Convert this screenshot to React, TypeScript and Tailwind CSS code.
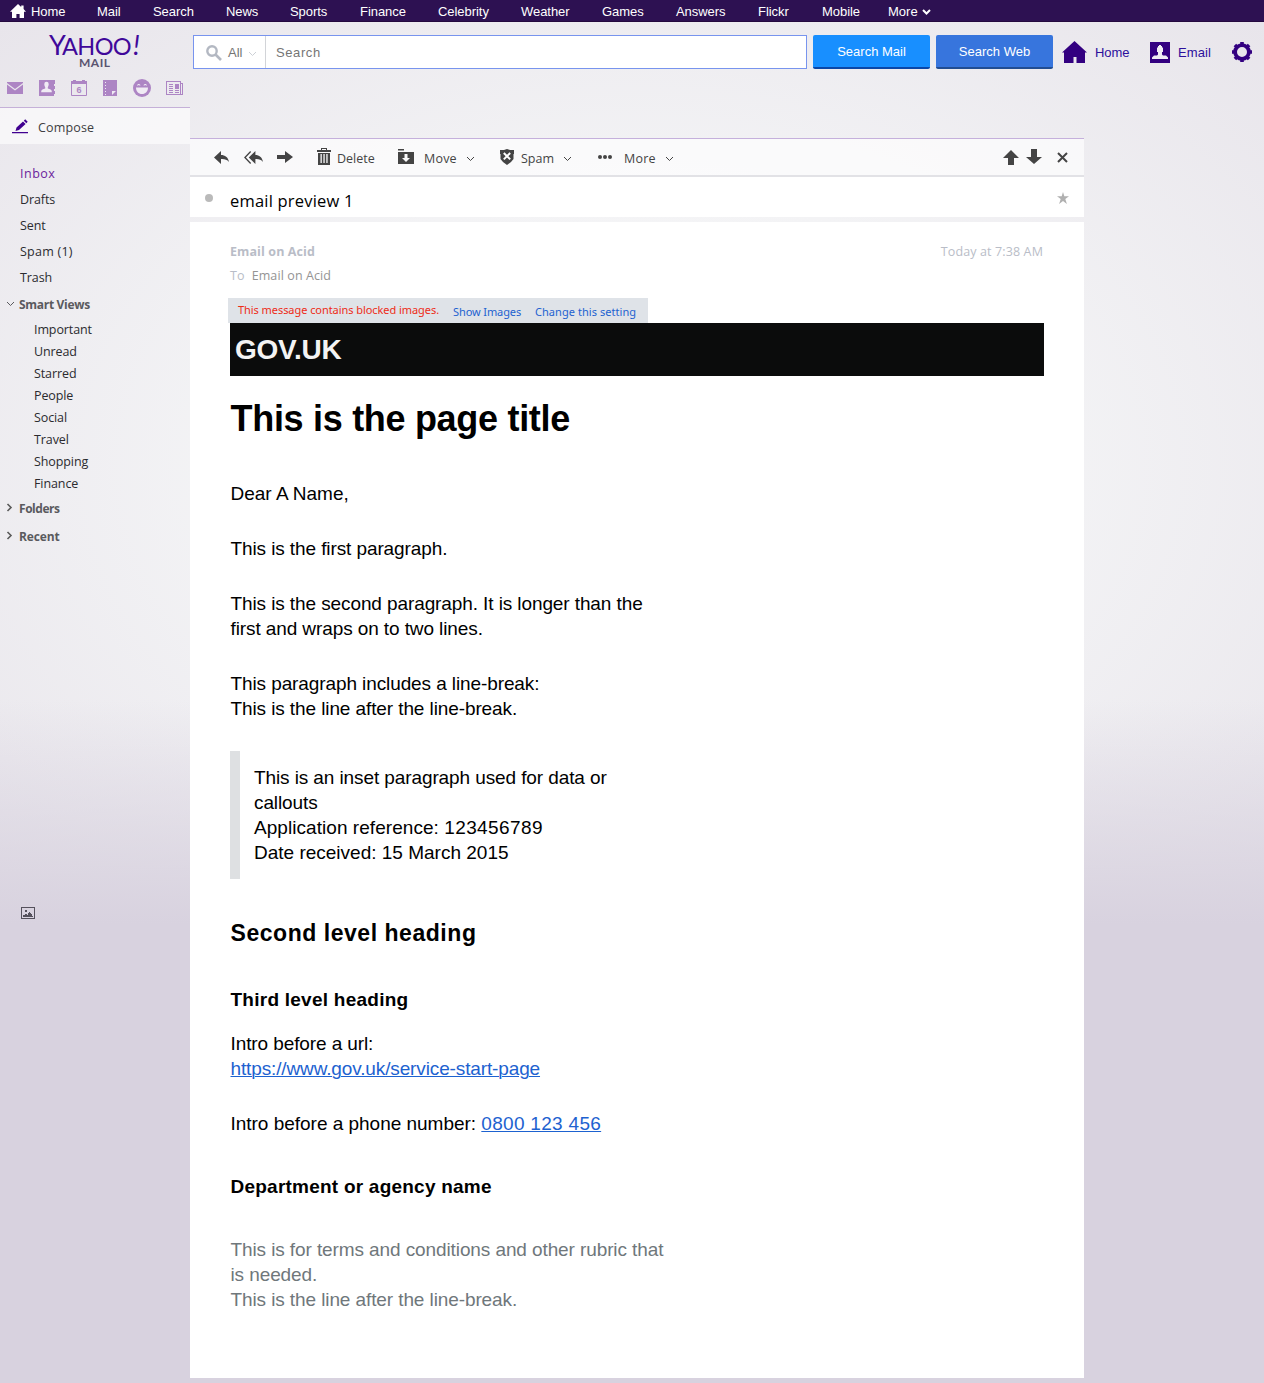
import type { ReactNode } from "react";

const NAV: [string, string][] = [
  ["Home", "w-[66px]"],
  ["Mail", "w-14"],
  ["Search", "w-[73px]"],
  ["News", "w-16"],
  ["Sports", "w-[70px]"],
  ["Finance", "w-[78px]"],
  ["Celebrity", "w-[83px]"],
  ["Weather", "w-[81px]"],
  ["Games", "w-[74px]"],
  ["Answers", "w-[82px]"],
  ["Flickr", "w-16"],
  ["Mobile", "w-[66px]"],
];

const FOLDERS: [string, string][] = [
  ["Inbox", "text-[#6b1e9c] tracking-[0.5px]"],
  ["Drafts", "tracking-[-0.1px]"],
  ["Sent", "tracking-[-0.1px]"],
  ["Spam (1)", "tracking-[0.25px]"],
  ["Trash", "tracking-[-0.1px]"],
];
const SMART = ["Important", "Unread", "Starred", "People", "Social", "Travel", "Shopping", "Finance"];

const UI = "font-['Open_Sans','Noto_Sans',sans-serif]";

function Chevron({ className = "", width = 1 }: { className?: string; width?: number }) {
  return (
    <svg className={className} width="9" height="6" viewBox="0 0 9 6" fill="none" stroke="currentColor" strokeWidth={width}>
      <path d="M1 1l3.5 3.5L8 1" />
    </svg>
  );
}

function ArrowHead() {
  return (
    <svg className="mr-[6px] -mt-[3px]" width="7" height="9" viewBox="0 0 7 9" fill="none" stroke="#5a5a5a" strokeWidth="1.6">
      <path d="M1.500 1l3.500 3.500L1.500 8" />
    </svg>
  );
}

function TopBar() {
  return (
    <header className="flex h-[22px] items-center border-b border-[#25093f] bg-[#2d1152] pl-[10px] text-[13px] leading-[22px] text-white">
      <svg width="16" height="14" viewBox="0 0 16 14" fill="#fff" className="mr-[5px]">
        <path d="M8 0l3.200 3V1.400h2.400V5L16 7.800h-2V14H9.600v-4H6.400v4H2V7.800H0z" />
      </svg>
      {NAV.map(([label, w]) => (
        <span key={label} className={`pt-[2px] tracking-[-0.05px] ${w}`}>{label}</span>
      ))}
      <span className="pt-[2px]">More</span>
      <Chevron className="ml-1 mt-[2px]" width={2} />
    </header>
  );
}

function Logo() {
  return (
    <div className="mt-[12px] ml-[49px] h-[35px] font-['Lato',sans-serif]">
      <div className="flex h-[24px] items-baseline text-[#40089a]">
        <span className="w-[13px] text-[27px] leading-[22px]">Y</span>
        <span className="w-[71px] text-[23.5px] leading-[22px] tracking-[-0.6px]">AHOO</span>
        <span className="text-[27px] leading-[22px] italic">!</span>
      </div>
      <div className="pl-[30px] text-[12px] leading-[9px] font-bold tracking-[0.5px] text-[#5b5470]">MAIL</div>
    </div>
  );
}

function AppIcons() {
  return (
    <div className="mt-[10px] flex h-[18px] items-center gap-4 pl-[7px] text-[#ad85c4]">
      <svg width="16" height="12" viewBox="0 0 16 12" fill="currentColor">
        <path d="M0 0h16v1L8 7 0 1zM0 2.400L8 8.600l8-6.200V12H0z" />
      </svg>
      <svg width="16" height="16" viewBox="0 0 16 16">
        <path d="M0 0h16v4h-1v2h1v3h-1v2h1v3h-1v2H0z" fill="currentColor" />
        <path d="M5.300 4a2.200 2.200 0 0 1 4.400 0c0 1.500-.4 2.400-.9 3.200v1.300c2 .5 4 1 4 3v.8H2.200v-.8c0-2 2-2.500 4-3V7.200C5.700 6.400 5.300 5.500 5.300 4z" fill="#f0ebf4" />
      </svg>
      <svg width="16" height="16" viewBox="0 0 16 16">
        <path d="M.5 2h15v13.500H.5z" fill="none" stroke="currentColor" />
        <path d="M0 1h2V0h3v1h6V0h3v1h2v3H0z" fill="currentColor" />
        <text x="8" y="13" fontSize="9" fontWeight="700" textAnchor="middle" fill="currentColor" fontFamily="Liberation Sans, sans-serif">6</text>
      </svg>
      <svg className="-mr-px" width="15" height="16" viewBox="0 0 15 16">
        <path d="M0 0h14v16H0z" fill="currentColor" />
        <path d="M2 2h1v1H2zM2 5h1v1H2zM2 8h1v1H2zM2 11h1v1H2zM2 14h1v1H2zM9 15v-4h4z" fill="#f0ebf4" />
      </svg>
      <svg className="-mr-px" width="18" height="18" viewBox="0 0 18 18">
        <circle cx="9" cy="9" r="9" fill="currentColor" />
        <path d="M3 8.500h12c0 4-2.500 6.500-6 6.500s-6-2.500-6-6.500zM4 6.500c.5-2 3-2 3.500 0h-1c-.3-.8-1.200-.8-1.500 0zM10.500 6.500c.5-2 3-2 3.500 0h-1c-.3-.8-1.200-.8-1.500 0z" fill="#f0ebf4" />
      </svg>
      <svg width="17" height="16" viewBox="0 0 17 16" fill="none" stroke="currentColor" shapeRendering="crispEdges">
        <path d="M.5 1.500h14v13H.5zM15 3.500h1.500v11H14" />
        <path d="M3 4.500h4M3 6.500h4M3 8.500h4M3 10.500h4M3 12.500h4M9 10.500h4M9 12.500h4" />
        <path d="M9 4h4v5H9z" fill="currentColor" stroke="none" />
      </svg>
    </div>
  );
}

function Sidebar() {
  return (
    <aside className={`flex w-[190px] shrink-0 flex-col ${UI} text-[12.5px] text-[#2b2b2f]`}>
      <Logo />
      <AppIcons />
      <div className="mt-[10px] flex h-[37px] items-center border-t border-[#c5b0d8] bg-white/60 pl-3 pt-[3px] text-[#3e3e42]">
        <svg width="16" height="15" viewBox="0 0 16 15" fill="#400090" className="mr-[10px] -mt-[3px]">
          <path d="M0 13h16v1.200H0zM3.500 12l1-3.500 6.500-6 2.600 2.600-6.600 6zM11.800 1.800L13.200.3l2.500 2.500-1.400 1.400z" />
        </svg>
        <span className="mt-[2px] tracking-[0.15px]">Compose</span>
      </div>
      <ul className="mt-[17px] pl-5 leading-[26px]">
        {FOLDERS.map(([f, c]) => (
          <li key={f} className={c}>{f}</li>
        ))}
      </ul>
      <div className="flex h-7 items-center pl-[6px] text-[12px] font-bold tracking-[-0.3px] text-[#5a5a5e]">
        <Chevron className="mr-[4px] -mt-[3px]" />Smart Views
      </div>
      <ul className="pl-[34px] leading-[22px] tracking-[-0.1px]">
        {SMART.map((f) => <li key={f}>{f}</li>)}
      </ul>
      <div className="flex h-7 items-center pl-[6px] text-[12px] font-bold tracking-[-0.45px] text-[#5a5a5e]"><ArrowHead />Folders</div>
      <div className="flex h-7 items-center pl-[6px] text-[12px] font-bold tracking-[-0.15px] text-[#5a5a5e]"><ArrowHead />Recent</div>
      <svg className="mt-[356px] ml-[21px]" width="14" height="12" viewBox="0 0 14 12" shapeRendering="crispEdges">
        <path d="M.5.5h13v11H.5z" fill="none" stroke="#55515c" />
        <path d="M4 3h2v2H4zM2 10V8h2V7h2v1h1V6h1V5h1v1h1v1h1v2h1v1z" fill="#55515c" />
      </svg>
    </aside>
  );
}

function Search() {
  return (
    <div className="flex h-[34px] items-start pl-[3px] text-[13px]">
      <div className="flex h-[34px] w-[614px] items-center border border-[#7894ee] bg-white text-[#757575]">
        <div className="flex h-full w-[72px] items-center border-r border-[#d2d4d8] pl-3">
          <svg className="mt-px" width="16" height="16" viewBox="0 0 16 16" fill="none" stroke="#b3b8c2">
            <circle cx="6" cy="6" r="4.700" strokeWidth="2.400" />
            <path d="M9.500 9.500L15 15" strokeWidth="2.600" />
          </svg>
          <span className="mt-[2px] ml-[6px]">All</span>
          <Chevron className="ml-[6px] mt-[3px] text-[#ccd0d6]" />
        </div>
        <span className="mt-[2px] pl-[10px] tracking-[0.6px]">Search</span>
      </div>
      <button className="ml-[6px] h-[34px] w-[117px] rounded-[2px] border-b-2 border-[#0a47a8] bg-[#188fff] pt-[2px] text-white">Search Mail</button>
      <button className="ml-[6px] h-[34px] w-[117px] rounded-[2px] border-b-2 border-[#214d92] bg-[#3775dd] pt-[2px] text-white">Search Web</button>
      <div className="flex h-[34px] items-center pl-[9px] text-[#2c0f9c]">
        <svg width="25" height="22" viewBox="0 0 25 22" fill="#330080">
          <path d="M12.500 0L25 11.500h-2V22h-8.500v-6h-3v6H2V11.500H0z" />
        </svg>
        <span className="mt-[2px] ml-2 w-[55px] tracking-[-0.1px]">Home</span>
        <svg width="20" height="21" viewBox="0 0 20 21">
          <path d="M0 0h20v21H0z" fill="#330080" />
          <path d="M7 5.500h1V4h1V3h2v1h1v1.500h1V10h-1v2.500l1 1h3l2 2V17H2v-1.500l2-2h3l1-1V10H7z" fill="#f0edf3" />
        </svg>
        <span className="mt-[2px] ml-2 w-[54px] tracking-[0.1px]">Email</span>
        <svg width="20" height="20" viewBox="0 0 20 20">
          <g fill="none" stroke="#330080">
            <circle cx="10" cy="10" r="6.900" strokeWidth="3.800" />
            <path d="M10 0v3M10 17v3M0 10h3M17 10h3M2.900 2.900L5 5M15 15l2.100 2.100M2.900 17.100L5 15M15 5l2.100-2.100" strokeWidth="3.600" />
          </g>
        </svg>
      </div>
    </div>
  );
}

const REPLY = "M0 6.500L7 0v4c4 0 7 2 8 7-2-2.500-4.500-3.200-8-3V13z";

function Toolbar() {
  return (
    <div className={`flex h-[39px] items-center border-t border-b-2 border-t-[#c5b0dc] border-b-[#e2e2e6] bg-white/65 pl-6 ${UI} text-[12.5px] text-[#444]`}>
      <svg width="15" height="13" viewBox="0 0 15 13" fill="currentColor"><path d={REPLY} /></svg>
      <svg className="ml-[15px]" width="19" height="13" viewBox="0 0 20 13" preserveAspectRatio="none" fill="currentColor">
        <path d={REPLY} transform="translate(5 0)" />
        <path d="M7 .5L1 6.500l6 6" fill="none" stroke="currentColor" strokeWidth="1.400" />
      </svg>
      <svg className="ml-[14px]" width="16" height="12" viewBox="0 0 16 12" fill="currentColor"><path d="M0 4h8V0l8 6-8 6V8H0z" /></svg>
      <svg className="ml-6 -mt-[2px]" width="14" height="17" viewBox="0 0 14 17" fill="currentColor">
        <path d="M4 0h6v2h4v2H0V2h4zm1 1v1h4V1zM1 5h12v12H1zm2.500 1v9h1.300V6zm2.900 0v9h1.300V6zm2.900 0v9h1.300V6z" fillRule="evenodd" />
      </svg>
      <span className="ml-[6px] mt-[4px] w-[61px]">Delete</span>
      <svg className="-mt-px" width="16" height="15" viewBox="0 0 16 15" fill="currentColor">
        <path d="M0 0h6v1.500H0zM0 3h16v12H0zM6.500 5v4H4l4 4 4-4H9.500V5z" fillRule="evenodd" />
      </svg>
      <span className="ml-[10px] mt-[4px] w-[42px] tracking-[0.2px]">Move</span>
      <Chevron className="mt-[4px]" />
      <svg className="ml-6" width="16" height="16" viewBox="0 0 16 16">
        <path d="M1 1h4l3-1 3 1h4v4h-.5v5L12 13l-4 3-4-3-2.500-3V5H1z" fill="currentColor" />
        <path d="M4.800 4l6.400 6.400M11.200 4l-6.400 6.400" stroke="#fff" strokeWidth="2" />
      </svg>
      <span className="ml-[6px] mt-[4px] w-[42px]">Spam</span>
      <Chevron className="mt-[4px]" />
      <svg className="ml-[26px] -mt-px" width="14" height="4" viewBox="0 0 14 4" fill="currentColor"><circle cx="2" cy="2" r="2" /><circle cx="7" cy="2" r="2" /><circle cx="12" cy="2" r="2" /></svg>
      <span className="ml-3 mt-[4px] w-[41px] tracking-[0.2px]">More</span>
      <Chevron className="mt-[4px]" />
      <svg className="ml-auto" width="16" height="15" viewBox="0 0 16 15" fill="currentColor"><path d="M8 0l8 8h-5v7H5V8H0z" /></svg>
      <svg className="ml-[7px] -mt-px" width="16" height="15" viewBox="0 0 16 15" fill="currentColor"><path d="M8 15l8-7h-5V0H5v8H0z" /></svg>
      <svg className="mr-4 ml-[15px]" width="11" height="11" viewBox="0 0 11 11" stroke="currentColor" strokeWidth="2"><path d="M1 1l9 9M10 1l-9 9" /></svg>
    </div>
  );
}

function P({ children, className = "" }: { children: ReactNode; className?: string }) {
  return <p className={`mb-[30px] text-[19px] leading-[25px] tracking-[-0.1px] ${className}`}>{children}</p>;
}

function Message() {
  return (
    <article className="mt-[5px] h-[1156px] bg-white pl-10 pt-[18px]">
      <div className={`${UI} w-[813px] text-[12.5px] leading-6 text-[#b9bdc7]`}>
        <div className="flex justify-between">
          <b className="tracking-[0.1px]">Email on Acid</b>
          <span className="tracking-[0.12px]">Today at 7:38 AM</span>
        </div>
        <div>To <span className="ml-[4px] tracking-[0.1px] text-[#949494]">Email on Acid</span></div>
      </div>
      <div className="mt-[10px] -ml-[2px] flex h-[25px] w-[420px] bg-[#dfe3e8] pl-[10px] font-['Noto_Sans',sans-serif] text-[11px] leading-[24px] text-[#1d62d0]">
        <span className="w-[215px] tracking-[-0.06px] text-[#ee2b17]">This message contains blocked images.</span>
        <span className="w-[82px] pt-[2px] tracking-[-0.1px]">Show Images</span>
        <span className="pt-[2px] tracking-[0.05px]">Change this setting</span>
      </div>
      <div className="h-[53px] w-[814px] bg-[#0b0c0c] pl-[5px] text-[28px] leading-[53px] font-bold tracking-[-0.25px] text-[#f3f3f3]">GOV.UK</div>
      <div className="pl-[0.5px] text-black">
        <h1 className="mt-[22px] mb-[41px] text-[36px] leading-[42px] font-bold tracking-[-0.3px]">This is the page title</h1>
        <P className="tracking-normal">Dear A Name,</P>
        <P>This is the first paragraph.</P>
        <P>This is the second paragraph. It is longer than the<br />first and wraps on to two lines.</P>
        <P>This paragraph includes a line-break:<br />This is the line after the line-break.</P>
        <div className="-ml-[0.5px] border-l-[10px] border-[#dee0e2] py-[14px] pl-[14px] text-[19px] leading-[25px] tracking-[-0.1px]">
          This is an inset paragraph used for data or<br />callouts<br />
          <span className="tracking-[0.05px]">Application reference: </span><span className="tracking-[0.4px]">123456789</span><br />
          <span className="tracking-normal">Date received: 15 March 2015</span>
        </div>
        <h2 className="mt-10 text-[23px] leading-7 font-bold tracking-[0.54px]">Second level heading</h2>
        <h3 className="mt-10 mb-[19px] text-[19px] leading-[25px] font-bold tracking-[0.25px]">Third level heading</h3>
        <P>Intro before a url:<br /><a className="tracking-[-0.13px] text-[#1d62d0] underline decoration-1">https://www.gov.uk/service-start-page</a></P>
        <P className="tracking-[-0.02px]">Intro before a phone number: <a className="tracking-[0.3px] text-[#1d62d0] underline decoration-1">0800 123 456</a></P>
        <h3 className="mt-[38px] mb-[38px] text-[19px] leading-[25px] font-bold tracking-[0.23px]">Department or agency name</h3>
        <P className="text-[#6f777b]">This is for terms and conditions and other rubric that<br />is needed.<br />This is the line after the line-break.</P>
      </div>
    </article>
  );
}

export default function App() {
  return (
    <div className="h-[1383px] w-[1264px] overflow-hidden bg-[linear-gradient(to_bottom,transparent_700px,#d8d2df_925px),radial-gradient(900px_620px_at_632px_465px,#f9f9fa,#f3f3f5_45%,#e8e5eb)] font-['Liberation_Sans',sans-serif]">
      <TopBar />
      <div className="flex">
        <Sidebar />
        <div className="pt-[13px]">
          <Search />
          <main className="mt-[69px] w-[894px]">
            <Toolbar />
            <div className="flex h-10 items-center bg-white pl-[15px]">
              <span className="mt-px size-2 rounded-full bg-[#bababa]" />
              <h2 className="mt-[7px] ml-[17px] font-['Open_Sans','Noto_Sans',sans-serif] text-[16.5px] leading-6 tracking-[0.2px] text-black">email preview 1</h2>
              <svg className="mt-px mr-[15px] ml-auto" width="12" height="12" viewBox="0 0 12 12" fill="#b0b0b0"><path d="M6 0l1.300 4.300H12L8.300 7l1.600 5L6 9 2.100 12l1.600-5L0 4.300h4.700z" /></svg>
            </div>
            <Message />
          </main>
        </div>
      </div>
    </div>
  );
}
